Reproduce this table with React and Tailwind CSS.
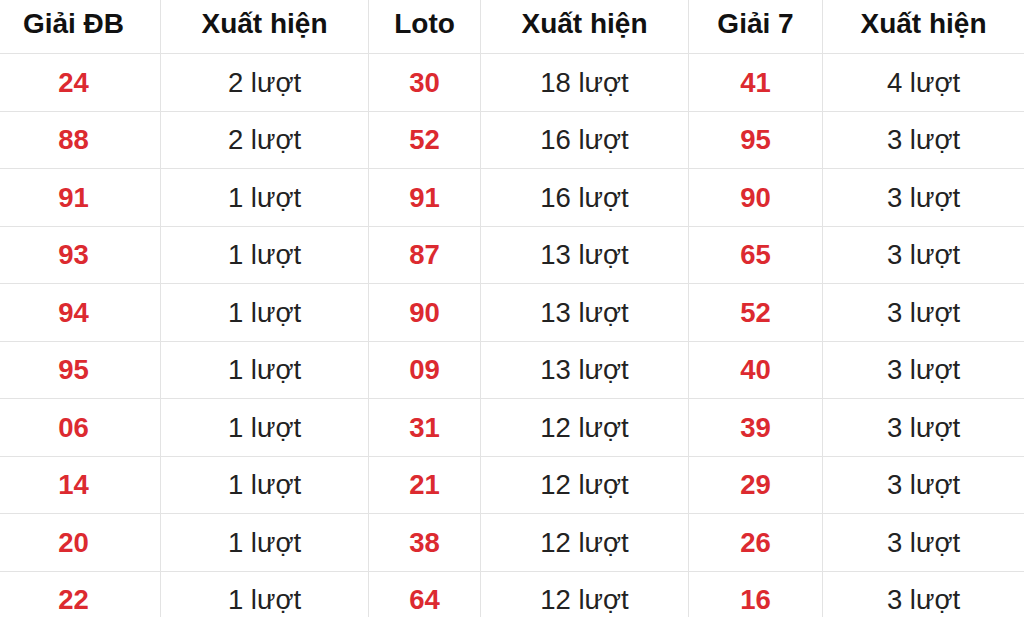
import React from "react";

const cols = [
  { key: "db", label: "Giải ĐB", w: "w-[160px] pr-[13px]", red: true },
  { key: "dbc", label: "Xuất hiện", w: "w-[208px] border-l" },
  { key: "loto", label: "Loto", w: "w-[112px] border-l", red: true },
  { key: "lotoc", label: "Xuất hiện", w: "w-[208px] border-l" },
  { key: "g7", label: "Giải 7", w: "w-[134px] border-l", red: true },
  { key: "g7c", label: "Xuất hiện", w: "w-[202px] border-l" },
];

const rows = [
  ["24", "2 lượt", "30", "18 lượt", "41", "4 lượt"],
  ["88", "2 lượt", "52", "16 lượt", "95", "3 lượt"],
  ["91", "1 lượt", "91", "16 lượt", "90", "3 lượt"],
  ["93", "1 lượt", "87", "13 lượt", "65", "3 lượt"],
  ["94", "1 lượt", "90", "13 lượt", "52", "3 lượt"],
  ["95", "1 lượt", "09", "13 lượt", "40", "3 lượt"],
  ["06", "1 lượt", "31", "12 lượt", "39", "3 lượt"],
  ["14", "1 lượt", "21", "12 lượt", "29", "3 lượt"],
  ["20", "1 lượt", "38", "12 lượt", "26", "3 lượt"],
  ["22", "1 lượt", "64", "12 lượt", "16", "3 lượt"],
];

export default function App() {
  return (
    <div
      className="w-[1024px] h-[625px] bg-white overflow-hidden"
      style={{ fontFamily: '"Liberation Sans", Arial, sans-serif' }}
    >
      <div className="h-[617px] overflow-hidden text-[27.5px]">
        <div className="flex h-[53px] text-[28px]">
          {cols.map((c) => (
            <div
              key={c.key}
              className={`${c.w} border-[#e3e3e3] flex items-center justify-center pb-[5px] font-bold text-[#111]`}
            >
              {c.label}
            </div>
          ))}
        </div>
        {rows.map((r, i) => (
          <div key={i} className="flex h-[57.5px] border-t border-[#e3e3e3]">
            {r.map((v, j) => (
              <div
                key={j}
                className={`${cols[j].w} border-[#e3e3e3] flex items-center justify-center ${
                  cols[j].red ? "font-bold text-[#dc2a30]" : "text-[#222]"
                }`}
              >
                {v}
              </div>
            ))}
          </div>
        ))}
      </div>
    </div>
  );
}
